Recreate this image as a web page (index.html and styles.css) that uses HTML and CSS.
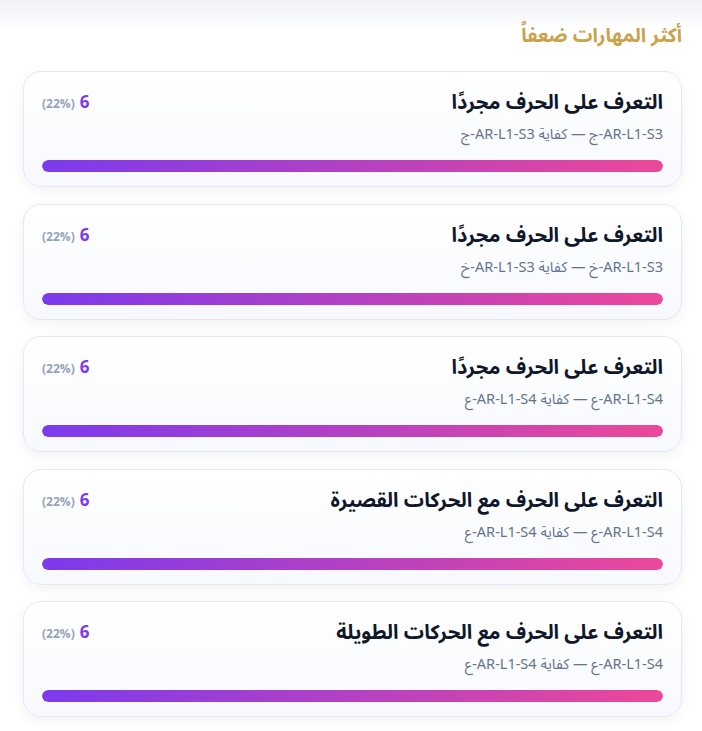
FILE: index.html
```html
<!DOCTYPE html>
<html lang="ar" dir="rtl">
<head>
    <meta charset="UTF-8">
    <meta name="viewport" content="width=device-width, initial-scale=1.0">
    <title>أكثر المهارات ضعفاً</title>
    <link rel="stylesheet" href="styles.css">
</head>
<body>
    <section class="panel">
        <h3 class="panel-title">أكثر المهارات ضعفاً</h3>
        <div class="skill-list">
            <div class="skill-card">
                <div class="skill-top">
                    <div class="skill-info">
                        <div class="skill-name">التعرف على الحرف مجردًا</div>
                        <div class="skill-code">AR-L1-S3-ج — كفاية AR-L1-S3-ج</div>
                    </div>
                    <div class="skill-score"><span class="count">6</span><span class="pct">(22%)</span></div>
                </div>
                <div class="bar"><div class="bar-fill" style="width: 100%"></div></div>
            </div>
            <div class="skill-card">
                <div class="skill-top">
                    <div class="skill-info">
                        <div class="skill-name">التعرف على الحرف مجردًا</div>
                        <div class="skill-code">AR-L1-S3-خ — كفاية AR-L1-S3-خ</div>
                    </div>
                    <div class="skill-score"><span class="count">6</span><span class="pct">(22%)</span></div>
                </div>
                <div class="bar"><div class="bar-fill" style="width: 100%"></div></div>
            </div>
            <div class="skill-card">
                <div class="skill-top">
                    <div class="skill-info">
                        <div class="skill-name">التعرف على الحرف مجردًا</div>
                        <div class="skill-code">AR-L1-S4-ع — كفاية AR-L1-S4-ع</div>
                    </div>
                    <div class="skill-score"><span class="count">6</span><span class="pct">(22%)</span></div>
                </div>
                <div class="bar"><div class="bar-fill" style="width: 100%"></div></div>
            </div>
            <div class="skill-card">
                <div class="skill-top">
                    <div class="skill-info">
                        <div class="skill-name">التعرف على الحرف مع الحركات القصيرة</div>
                        <div class="skill-code">AR-L1-S4-ع — كفاية AR-L1-S4-ع</div>
                    </div>
                    <div class="skill-score"><span class="count">6</span><span class="pct">(22%)</span></div>
                </div>
                <div class="bar"><div class="bar-fill" style="width: 100%"></div></div>
            </div>
            <div class="skill-card">
                <div class="skill-top">
                    <div class="skill-info">
                        <div class="skill-name">التعرف على الحرف مع الحركات الطويلة</div>
                        <div class="skill-code">AR-L1-S4-ع — كفاية AR-L1-S4-ع</div>
                    </div>
                    <div class="skill-score"><span class="count">6</span><span class="pct">(22%)</span></div>
                </div>
                <div class="bar"><div class="bar-fill" style="width: 100%"></div></div>
            </div>
        </div>
    </section>
</body>
</html>
```

FILE: styles.css
```css
html {
    background: #ffffff linear-gradient(#eff1f5, #ffffff 30px) no-repeat;
}
body {
    margin: 0;
    font-family: "Noto Sans Arabic", "Noto Sans", "DejaVu Sans", sans-serif;
    color: #0f172a;
}
.panel {
    padding: 23px 20px 14px 23px;
}
.panel-title {
    margin: 0 0 22px;
    font-size: 19.5px;
    line-height: 26px;
    font-weight: 700;
    color: #c9a24a;
}
.skill-list {
    display: flex;
    flex-direction: column;
    gap: 16.5px;
}
.skill-card {
    background: linear-gradient(#ffffff, #f7f9fe);
    border: 1px solid #e3e8f2;
    border-radius: 18px;
    padding: 18px 18px 14px;
    box-shadow: 0 4px 14px rgba(15, 23, 42, 0.05);
}
.skill-top {
    display: flex;
    justify-content: space-between;
    align-items: flex-start;
}
.skill-name {
    font-size: 20px;
    line-height: 27px;
    font-weight: 700;
    color: #0f172a;
}
.skill-code {
    margin-top: 7px;
    height: 22px;
    font-size: 14.5px;
    line-height: 22px;
    color: #64748b;
}
.skill-score {
    display: flex;
    align-items: baseline;
    gap: 5px;
    line-height: 27px;
}
.count {
    font-size: 17px;
    font-weight: 700;
    color: #7c3aed;
}
.pct {
    font-size: 12px;
    font-weight: 700;
    color: #94a3b8;
}
.bar {
    margin-top: 14px;
    height: 12px;
    border-radius: 999px;
    background: #eef0f6;
    overflow: hidden;
}
.bar-fill {
    height: 100%;
    border-radius: 999px;
    background: linear-gradient(to right, #7c3aed, #ec4899);
}
```
